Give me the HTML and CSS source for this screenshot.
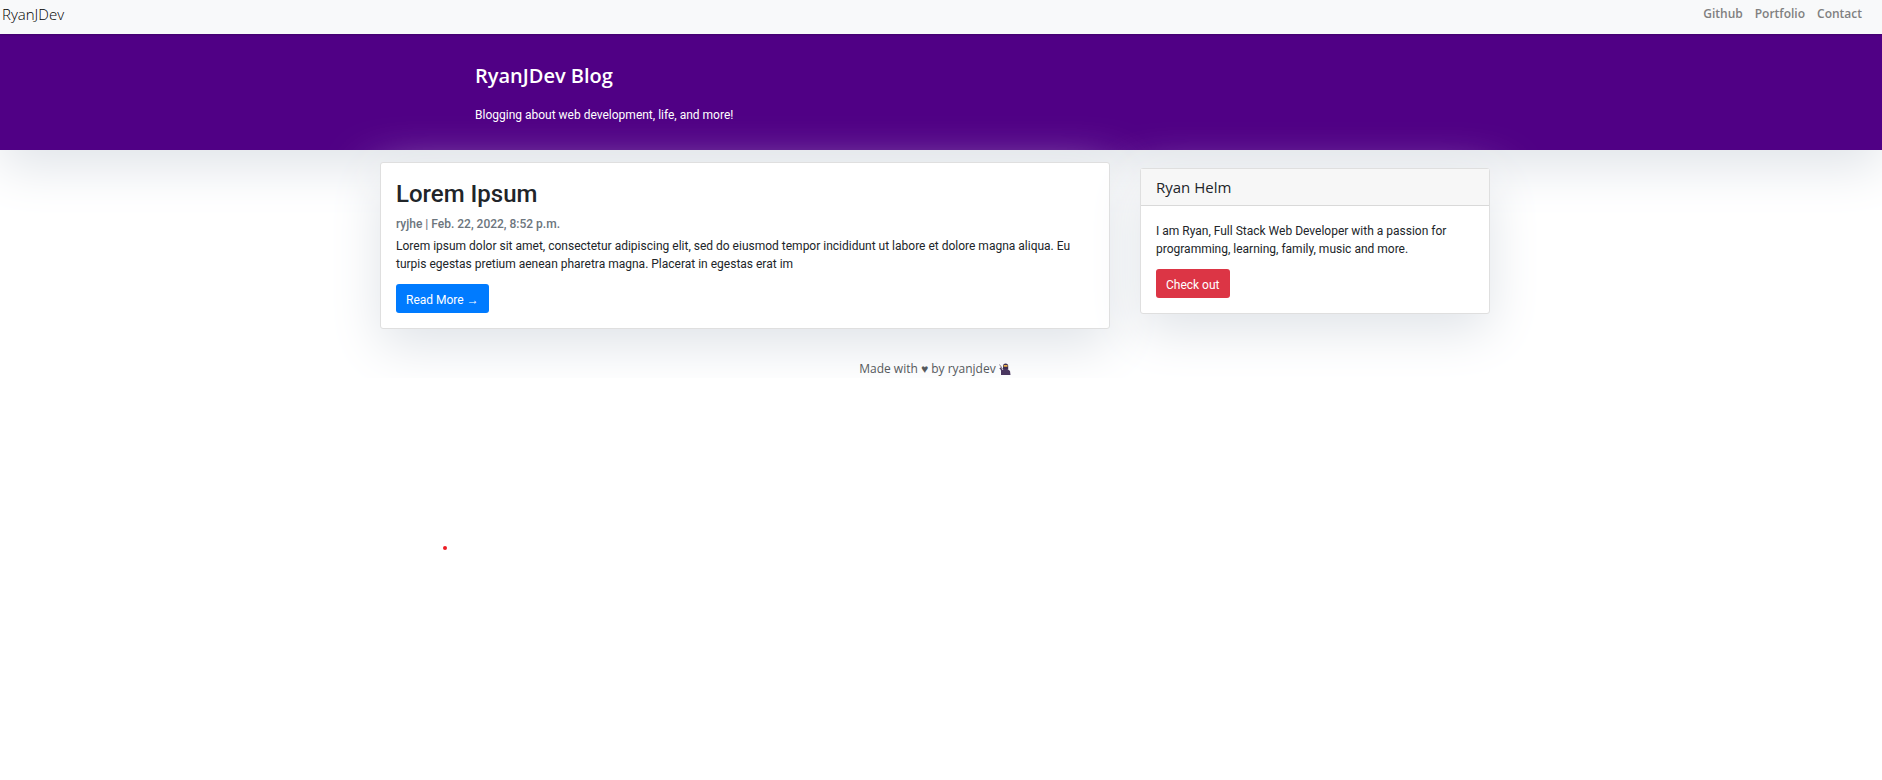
FILE: index.html
```
<!DOCTYPE html>
<html lang="en">
<head>
<meta charset="utf-8">
<title>RyanJDev Blog</title>
<link rel="stylesheet" href="styles.css">
</head>
<body>
<nav class="navbar">
  <a class="brand" href="#">RyanJDev</a>
  <ul class="nav-links">
    <li><a href="#">Github</a></li>
    <li><a href="#">Portfolio</a></li>
    <li><a href="#">Contact</a></li>
  </ul>
</nav>
<header class="masthead">
  <div class="masthead-inner">
    <h1 class="site-title">RyanJDev Blog</h1>
    <p class="tagline">Blogging about web development, life, and more!</p>
  </div>
</header>
<main class="container layout">
  <article class="card post">
    <h2 class="post-title">Lorem Ipsum</h2>
    <p class="post-meta">ryjhe | Feb. 22, 2022, 8:52 p.m.</p>
    <p class="text">Lorem ipsum dolor sit amet, consectetur adipiscing elit, sed do eiusmod tempor incididunt ut labore et dolore magna aliqua. Eu turpis egestas pretium aenean pharetra magna. Placerat in egestas erat im</p>
    <a class="btn btn-primary" href="#">Read More →</a>
  </article>
  <aside class="card about">
    <h2 class="about-title">Ryan Helm</h2>
    <div class="about-body">
      <p class="text">I am Ryan, Full Stack Web Developer with a passion for programming, learning, family, music and more.</p>
      <a class="btn btn-danger" href="#">Check out</a>
    </div>
  </aside>
</main>
<footer class="container footer">
  <p class="credit">Made with <span class="heart">♥</span> by ryanjdev
    <svg class="ninja" viewBox="0 0 12 12" role="img" aria-label="ninja">
      <path d="M0.500 1.500L3.500 6M0.500 5.500L3 4" stroke="#8a8392" stroke-width="1" fill="none"/>
      <path d="M2 12V8L4.500 6h4L11 8l.5 4z" fill="#4a3760"/>
      <path d="M4 6V3a2.600 2.600 0 0 1 5.200 0v3z" fill="#3f2f52"/>
      <path d="M4.700 2h3.800v1.800H4.700z" fill="#e8b04c"/>
      <path d="M1.500 5l2 4" stroke="#4a3760" stroke-width="1.500"/>
    </svg></p>
</footer>
<svg class="dot" viewBox="0 0 4 4" aria-hidden="true"><ellipse cx="2" cy="2" rx="2" ry="2" fill="#ed1c24"/></svg>
</body>
</html>
```
FILE: styles.css
```
* { box-sizing: border-box; }
body {
  margin: 0;
  background: #fff;
  color: #212529;
  font: 400 12px/18px Roboto, "Open Sans", sans-serif;
}
h1, h2, p, ul { margin: 0; padding: 0; }
a { color: inherit; text-decoration: none; }
.navbar, .site-title, .about-title, .footer { font-family: "Open Sans", sans-serif; }

.navbar {
  position: relative;
  display: flex;
  justify-content: space-between;
  padding: 4px 20px 10px 2px;
  background: #f8f9fa;
  box-shadow: 0 1px 2px rgba(0, 0, 0, .2);
}
.brand {
  font-size: 15px;
  line-height: 20px;
  font-weight: 300;
  color: #000;
}
.nav-links {
  display: flex;
  gap: 12px;
  list-style: none;
  line-height: 20px;
  font-weight: 600;
  color: #808080;
}

.masthead {
  padding: 28px 0 26px;
  background: #500085;
  color: #fff;
  box-shadow: 0 16px 52px #dfe3e8;
}
.masthead-inner { max-width: 932px; margin: 0 auto; }
.site-title { font-size: 20px; line-height: 28px; font-weight: 600; }
.tagline { margin-top: 16px; }

.container {
  max-width: 1122px;
  margin: 0 auto;
  padding-right: 12px;
}
.layout {
  display: grid;
  grid-template-columns: 730fr 350fr;
  gap: 30px;
  align-items: start;
  padding-top: 12px;
}
.card {
  border: 1px solid #dfdfdf;
  border-radius: 3px;
  background: #fff;
  box-shadow: 0 16px 52px #dfe3e8;
}
.post { padding: 15px; }
.post-title { font-size: 24px; line-height: 32px; font-weight: 500; }
.post-meta { margin: 5px 0 4px; color: #6c757d; font-weight: 500; }
.btn {
  display: inline-block;
  margin-top: 11px;
  padding: 7px 10px 4px;
  border-radius: 3px;
  color: #fff;
}
.btn-primary { background: #007bff; }
.btn-danger { background: #dc3545; }

.about { margin-top: 6px; }
.about-title {
  padding: 9px 15px;
  border-bottom: 1px solid #d9d9d9;
  background: #f7f7f7;
  font-size: 15px;
  line-height: 18px;
  font-weight: 500;
}
.about-body { padding: 16px 15px 15px; }

.footer { padding-top: 31px; text-align: center; color: #55595c; }
.ninja { width: 12px; height: 12px; vertical-align: -2px; }

.dot { position: absolute; left: 443px; top: 546px; width: 4px; height: 4px; }
```
